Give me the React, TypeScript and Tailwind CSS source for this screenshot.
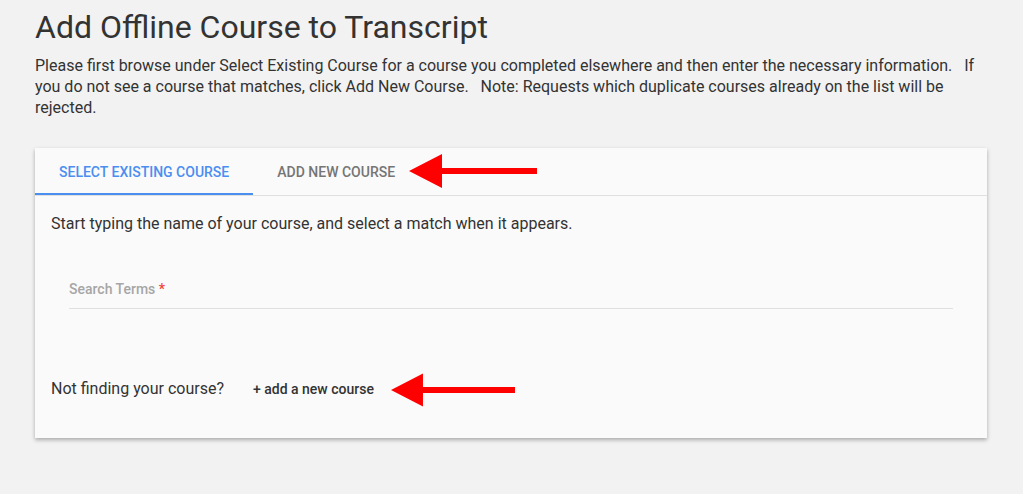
import React from 'react';

const Arrow: React.FC<{ className: string }> = ({ className }) => (
  <svg className={className} width="128" height="34" viewBox="0 0 128 34">
    <polygon points="0,17 33,0 33,14 128,14 128,20 33,20 33,34" fill="#ff0000" />
  </svg>
);

const App: React.FC = () => {
  return (
    <div className="min-h-[494px] bg-[#f2f2f2] pl-[35px] pr-[36px] pb-10 font-['Roboto',sans-serif] text-[#333]">
      <h1 className="pt-[7px] text-[32px] leading-[40px] font-normal text-[#333]">
        Add Offline Course to Transcript
      </h1>
      <p className="mt-[8px] text-[16px] leading-[21px] text-[#333]">
        Please first browse under Select Existing Course for a course you completed elsewhere and then enter the necessary information.&nbsp;&nbsp; If you do not see a course that matches, click Add New Course.&nbsp;&nbsp; Note: Requests which duplicate courses already on the list will be rejected.
      </p>

      <div className="relative mt-[30px] h-[290px] bg-[#fafafa] shadow-[0_2px_4px_rgba(0,0,0,0.3)]">
        {/* Tabs */}
        <div className="flex h-[48px] border-b border-[#e0e0e0]">
          <div className="flex h-full items-center px-6 pt-[1px] text-[14px] font-medium text-[#4a8ef0] shadow-[inset_0_-2px_0_#4a8ef0]">
            SELECT EXISTING COURSE
          </div>
          <div className="flex h-full items-center px-6 pt-[1px] text-[14px] font-medium text-[#757575]">
            ADD NEW COURSE
          </div>
        </div>

        <div className="px-4 pt-4">
          <p className="text-[16px] leading-6">Start typing the name of your course, and select a match when it appears.</p>

          <div className="mx-[18px] mt-[41px] border-b border-[#e0e0e0] pb-[7px]">
            <span className="text-[14px] font-medium text-[#a6a6a6]">
              Search Terms <span className="text-[#f44336]">*</span>
            </span>
          </div>

          <div className="mt-[68px] flex items-center">
            <span className="text-[16px] leading-6">Not finding your course?</span>
            <button className="ml-[29px] text-[14px] font-medium text-[#333]">+ add a new course</button>
          </div>
        </div>

        {/* annotation arrows */}
        <Arrow className="absolute left-[374px] top-[6px]" />
        <Arrow className="absolute left-[356px] top-[225px] w-[124px]" />
      </div>
    </div>
  );
};

export default App;
